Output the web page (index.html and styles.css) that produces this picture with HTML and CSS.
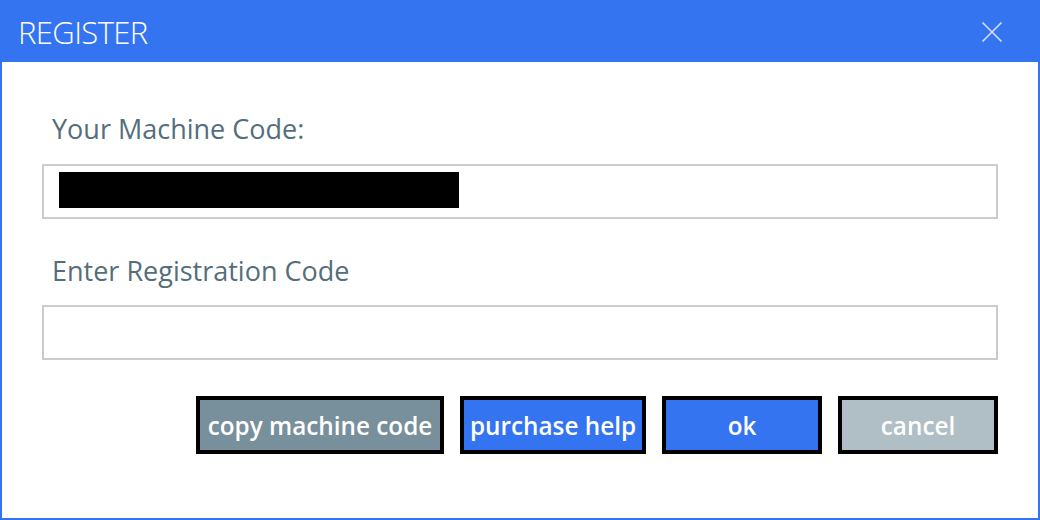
FILE: index.html
```html
<!DOCTYPE html>
<html>
<head>
<meta charset="utf-8">
<link rel="stylesheet" href="styles.css">
</head>
<body>
<div class="window">
  <div class="titlebar">
    <span class="title">REGISTER</span>
    <button class="close" aria-label="close">
      <svg width="22" height="22" viewBox="0 0 22 22"><path d="M1.5 1.5 L20.5 20.5 M20.5 1.5 L1.5 20.5" stroke="#d3e2fb" stroke-width="1.6" fill="none"/></svg>
    </button>
  </div>
  <div class="content">
    <label class="label label-first">Your Machine Code:</label>
    <div class="field"><span class="redacted"></span></div>
    <label class="label label-second">Enter Registration Code</label>
    <div class="field"></div>
    <div class="actions">
      <button class="btn btn-grey btn-wide">copy machine code</button>
      <button class="btn btn-blue btn-medium">purchase help</button>
      <button class="btn btn-blue btn-fixed">ok</button>
      <button class="btn btn-light btn-fixed">cancel</button>
    </div>
  </div>
</div>
</body>
</html>
```

FILE: styles.css
```css
* { box-sizing: border-box; }
html, body { margin: 0; padding: 0; background: #ffffff; }
body { font-family: "Open Sans", "Noto Sans", sans-serif; }

.window {
  width: 1040px;
  height: 520px;
  border: 2px solid #3574f0;
  border-top: 0;
  display: flex;
  flex-direction: column;
  background: #fff;
}

.titlebar {
  height: 62px;
  margin: 0 -2px;
  background: #3574f0;
  display: flex;
  align-items: center;
  justify-content: space-between;
  padding: 0 37px 0 18px;
}
.title {
  color: #ffffff;
  font-weight: 300;
  font-size: 31px;
  letter-spacing: -0.6px;
  line-height: 40px;
  margin-top: 2px;
}
.close {
  background: none;
  border: 0;
  padding: 0;
  width: 22px;
  height: 22px;
  display: flex;
  margin-top: 2px;
}

.content {
  padding: 48px 40px 0 40px;
  display: flex;
  flex-direction: column;
}
.label {
  display: block;
  color: #546e7a;
  font-size: 27px;
  line-height: 37px;
  padding-left: 10px;
}
.label-first { margin-bottom: 17px; }
.label-second { margin-top: 33px; margin-bottom: 16px; }

.field {
  height: 55px;
  border: 2px solid #cccccc;
  padding: 6px 15px;
  display: flex;
}
.redacted {
  width: 400px;
  height: 36px;
  background: #000;
}

.actions {
  margin-top: 36px;
  display: flex;
  justify-content: flex-end;
  gap: 16px;
}
.btn {
  height: 58px;
  border: 4px solid #000;
  padding: 2px 0 0 0;
  color: #ffffff;
  font-family: "Open Sans", "Noto Sans", sans-serif;
  font-weight: 600;
  font-size: 24.3px;
  line-height: 30px;
  white-space: nowrap;
  text-align: center;
}
.btn-grey { background: #78909c; }
.btn-blue { background: #3574f0; }
.btn-light { background: #b0bec5; }
.btn-wide { width: 248px; }
.btn-medium { width: 186px; }
.btn-fixed { width: 160px; }
```
